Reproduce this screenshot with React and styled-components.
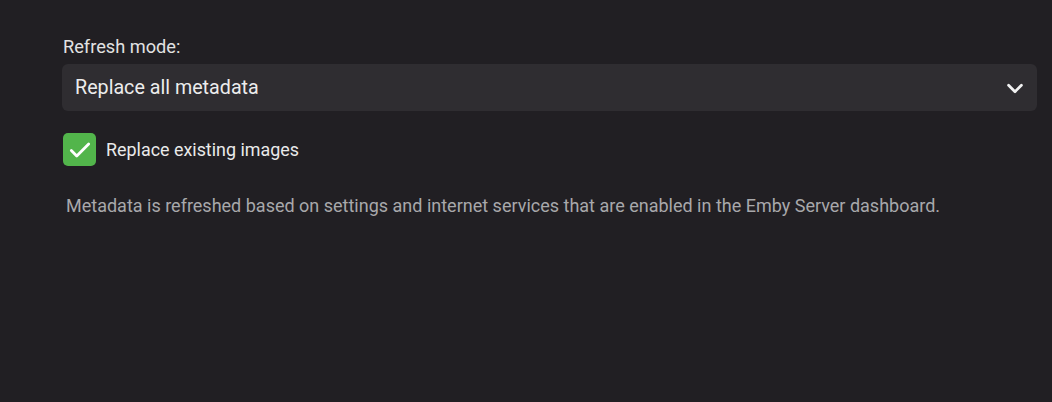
import React from "react";
import styled, { createGlobalStyle } from "styled-components";

const Global = createGlobalStyle`
  html, body { margin: 0; padding: 0; background: #211f23; }
  body { font-family: Roboto, "Noto Sans", sans-serif; color: #e6e6e6; }
`;

const Page = styled.div`
  width: 1052px;
  height: 402px;
  box-sizing: border-box;
  padding: 36px 15px 0 62px;
  background: #211f23;
`;

const Label = styled.label`
  display: block;
  font-size: 18.2px;
  line-height: 22px;
  color: #e2e2e2;
  margin-left: 1px;
  margin-bottom: 6px;
`;

const Select = styled.div`
  height: 47px;
  border-radius: 6px;
  background: #2f2d31;
  display: flex;
  align-items: center;
  justify-content: space-between;
  padding: 0 11px 0 13px;
  font-size: 19.7px;
  color: #ececec;
`;

const CheckRow = styled.div`
  display: flex;
  align-items: center;
  gap: 10px;
  margin-top: 22px;
  margin-left: 1px;
  font-size: 17.9px;
  color: #eaeaea;
`;

const Box = styled.span`
  width: 33px;
  height: 33px;
  border-radius: 5px;
  background: #52b54b;
  display: flex;
  align-items: center;
  justify-content: center;
`;

const Help = styled.p`
  margin: 29px 0 0 4px;
  font-size: 18px;
  line-height: 21px;
  color: #a8a8ab;
`;

export default function App() {
  return (
    <>
      <Global />
      <Page>
        <Label>Refresh mode:</Label>
        <Select>
          <span>Replace all metadata</span>
          <svg width="22" height="22" viewBox="0 0 24 24">
            <path d="M5 9l7 7 7-7" fill="none" stroke="#f2f2f2" strokeWidth="3" strokeLinecap="round" strokeLinejoin="round" />
          </svg>
        </Select>
        <CheckRow>
          <Box>
            <svg width="26" height="26" viewBox="0 0 24 24">
              <path d="M4 12.5l5 5L20 6.5" fill="none" stroke="#fff" strokeWidth="2.6" strokeLinecap="round" strokeLinejoin="round" />
            </svg>
          </Box>
          <span>Replace existing images</span>
        </CheckRow>
        <Help>Metadata is refreshed based on settings and internet services that are enabled in the Emby Server dashboard.</Help>
      </Page>
    </>
  );
}
